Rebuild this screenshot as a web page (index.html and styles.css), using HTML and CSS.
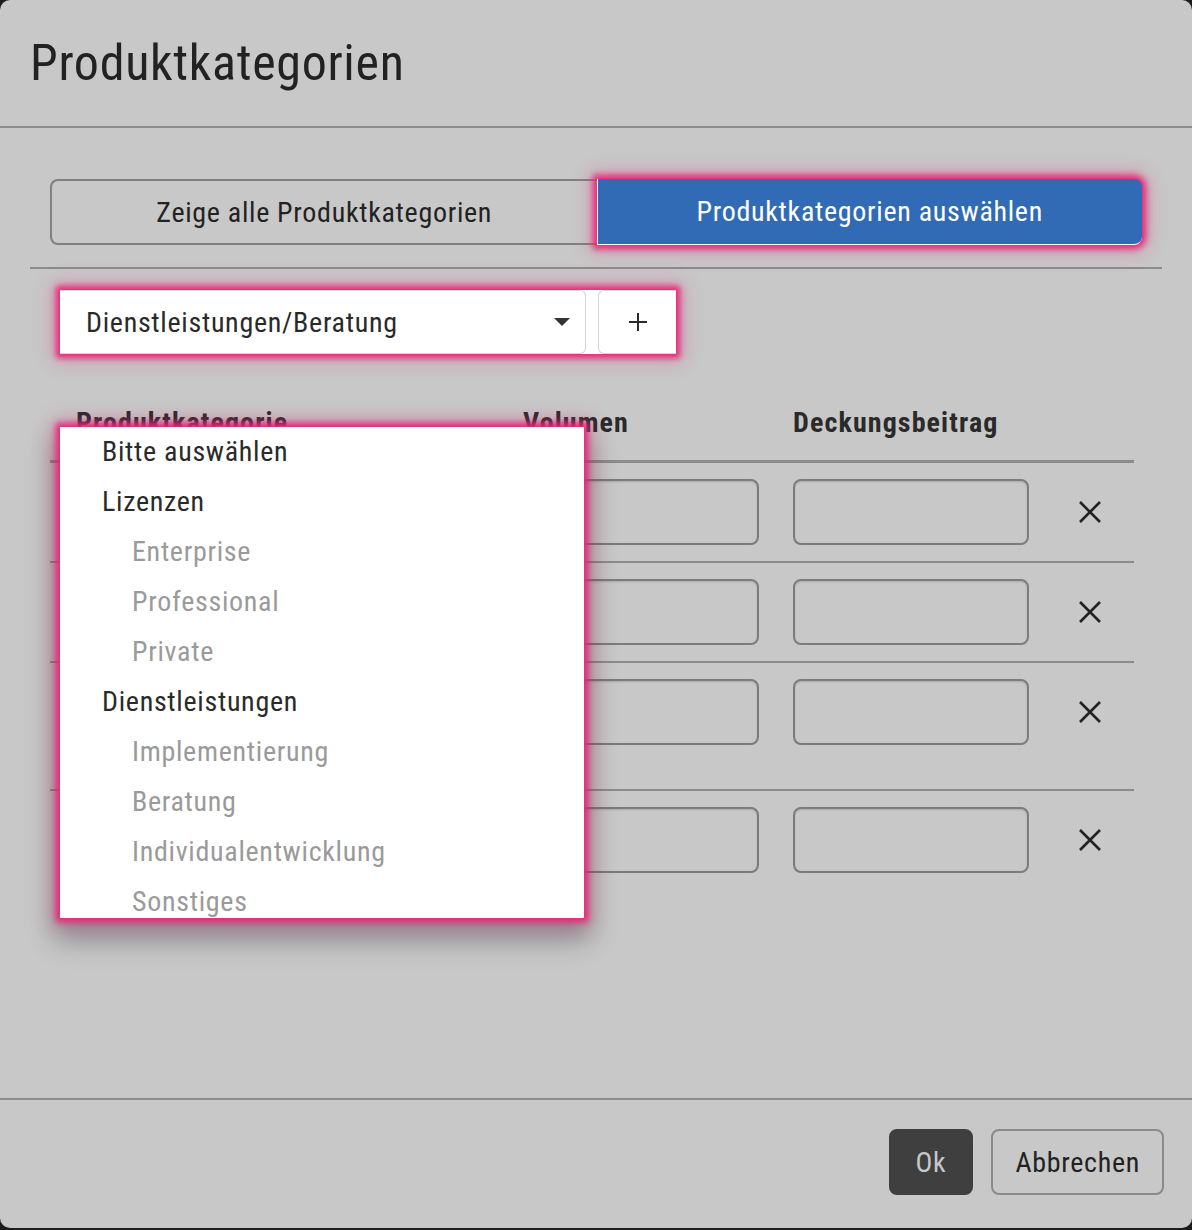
FILE: index.html
```html
<!DOCTYPE html>
<html lang="de">
<head>
  <meta charset="UTF-8">
  <meta name="viewport" content="width=device-width, initial-scale=1.0">
  <title>Produktkategorien</title>
  <link rel="stylesheet" href="styles.css">
</head>
<body>
  <div class="dialog">
    <!-- Header -->
    <header class="dialog-header">
      <h1>Produktkategorien</h1>
    </header>

    <div class="dialog-body">
      <!-- Mode toggle -->
      <div class="toggle-group">
        <button type="button" class="toggle">Zeige alle Produktkategorien</button>
        <button type="button" class="toggle active">Produktkategorien auswählen</button>
      </div>

      <div class="divider"></div>

      <!-- Category picker -->
      <div class="picker">
        <div class="select">
          <span>Dienstleistungen/Beratung</span>
          <span class="caret"></span>
        </div>
        <button type="button" class="add-btn">
          <svg width="22" height="22" viewBox="0 0 22 22"><path d="M11 2v18M2 11h18" stroke="#2a2a2a" stroke-width="2" fill="none"/></svg>
        </button>

        <ul class="dropdown">
          <li>Bitte auswählen</li>
          <li>Lizenzen</li>
          <li class="sub">Enterprise</li>
          <li class="sub">Professional</li>
          <li class="sub">Private</li>
          <li>Dienstleistungen</li>
          <li class="sub">Implementierung</li>
          <li class="sub">Beratung</li>
          <li class="sub">Individualentwicklung</li>
          <li class="sub">Sonstiges</li>
        </ul>
      </div>

      <!-- Category table (first column lies under the open dropdown) -->
      <div class="table">
        <div class="row head">
          <div>Produktkategorie</div>
          <div>Volumen</div>
          <div>Deckungsbeitrag</div>
          <div></div>
        </div>
        <div class="row">
          <div class="cat"></div>
          <input type="text">
          <input type="text">
          <button type="button" class="remove"><svg width="24" height="24" viewBox="0 0 24 24"><path d="M2 2l20 20M22 2L2 22" stroke="#222" stroke-width="2.6" fill="none"/></svg></button>
        </div>
        <div class="row">
          <div class="cat"></div>
          <input type="text">
          <input type="text">
          <button type="button" class="remove"><svg width="24" height="24" viewBox="0 0 24 24"><path d="M2 2l20 20M22 2L2 22" stroke="#222" stroke-width="2.6" fill="none"/></svg></button>
        </div>
        <div class="row">
          <div class="cat tall"></div>
          <input type="text">
          <input type="text">
          <button type="button" class="remove"><svg width="24" height="24" viewBox="0 0 24 24"><path d="M2 2l20 20M22 2L2 22" stroke="#222" stroke-width="2.6" fill="none"/></svg></button>
        </div>
        <div class="row last">
          <div class="cat"></div>
          <input type="text">
          <input type="text">
          <button type="button" class="remove"><svg width="24" height="24" viewBox="0 0 24 24"><path d="M2 2l20 20M22 2L2 22" stroke="#222" stroke-width="2.6" fill="none"/></svg></button>
        </div>
      </div>
    </div>

    <!-- Footer -->
    <footer class="dialog-footer">
      <button type="button" class="btn btn-primary">Ok</button>
      <button type="button" class="btn">Abbrechen</button>
    </footer>
  </div>
</body>
</html>
```

FILE: styles.css
```css
/* Global Styles */
* {
  margin: 0;
  padding: 0;
  box-sizing: border-box;
}
html {
  background-color: #1c1c1c;
}
body {
  font-family: "Liberation Sans Narrow", "Roboto Condensed", "DejaVu Sans Condensed", "Open Sans", sans-serif;
  color: #2a2a2a;
  font-size: 28px;
  letter-spacing: 0.7px;
}
button, input {
  font: inherit;
  color: inherit;
  letter-spacing: inherit;
}

/* Dialog */
.dialog {
  width: 1192px;
  height: 1228px;
  background-color: #c8c8c8;
  border-radius: 10px;
  display: flex;
  flex-direction: column;
}
.dialog-header {
  height: 128px;
  padding: 0 30px;
  display: flex;
  align-items: center;
  border-bottom: 2px solid #8c8c8c;
}
.dialog-header h1 {
  font-size: 50px;
  font-weight: normal;
  letter-spacing: 0.7px;
  color: #222;
}
.dialog-body {
  flex: 1;
  padding: 51px 30px 0;
}

/* Toggle */
.toggle-group {
  display: flex;
  margin: 0 20px;
  height: 66px;
}
.toggle {
  flex: 1;
  background: transparent;
  border: 2px solid #808080;
  border-right: none;
  border-radius: 8px 0 0 8px;
  color: #222;
  cursor: pointer;
}
.toggle.active {
  background-color: #326bb5;
  color: #fff;
  border: none;
  border-left: 1px solid #fff;
  border-bottom: 1px solid #fff;
  border-radius: 0 8px 8px 0;
  box-shadow: 0 0 6px 4px #e8287a, 0 0 18px 7px rgba(232, 40, 122, 0.3);
}
.divider {
  height: 2px;
  background-color: #8c8c8c;
  margin-top: 22px;
}

/* Picker */
.picker {
  position: relative;
  display: flex;
  gap: 12px;
  width: 616px;
  height: 64px;
  margin: 21px 0 0 30px;
  background: #fff;
  box-shadow: 0 0 6px 4px #e8287a, 0 0 18px 7px rgba(232, 40, 122, 0.3);
}
.select {
  flex: 1;
  display: flex;
  align-items: center;
  justify-content: space-between;
  padding: 0 15px 0 26px;
  border: 1px solid #d4d4d4;
  border-left: none;
  border-radius: 0 6px 6px 0;
}
.caret {
  border-left: 8px solid transparent;
  border-right: 8px solid transparent;
  border-top: 8px solid #333;
}
.add-btn {
  width: 78px;
  background: #fff;
  border: 1px solid #d4d4d4;
  border-right: none;
  border-radius: 6px 0 0 6px;
  display: flex;
  align-items: center;
  justify-content: center;
}
.dropdown {
  position: absolute;
  top: 137px;
  left: 0;
  width: 524px;
  height: 491px;
  overflow: hidden;
  list-style: none;
  background: #fff;
  z-index: 2;
  box-shadow: 0 0 6px 4px #e8287a, 0 0 18px 7px rgba(232, 40, 122, 0.3), 0 16px 26px 6px rgba(0, 0, 0, 0.3);
}
.dropdown li {
  height: 50px;
  line-height: 50px;
  padding-left: 42px;
  color: #2a2a2a;
}
.dropdown li.sub {
  padding-left: 72px;
  color: #9a9a9a;
}

/* Table */
.table {
  margin: 40px 28px 0 20px;
}
.row {
  display: grid;
  grid-template-columns: 1fr 236px 236px 54px;
  column-gap: 34px;
  align-items: start;
  padding: 16px 17px 16px 26px;
  border-bottom: 2px solid #8c8c8c;
}
.row.head {
  padding-top: 12px;
  padding-bottom: 20px;
  border-bottom-width: 3px;
  font-weight: bold;
  letter-spacing: 1.1px;
  line-height: 34px;
}
.row.last {
  border-bottom: none;
}
.cat {
  height: 66px;
}
.cat.tall {
  height: 94px;
}
.row input {
  height: 66px;
  width: 100%;
  background: transparent;
  border: 2px solid #7c7c7c;
  border-radius: 8px;
  box-shadow: inset 0 1px 2px rgba(0, 0, 0, 0.15);
}
.remove {
  height: 66px;
  background: none;
  border: none;
  display: flex;
  align-items: center;
  justify-content: center;
  cursor: pointer;
}

/* Footer */
.dialog-footer {
  height: 130px;
  border-top: 2px solid #8c8c8c;
  display: flex;
  justify-content: flex-end;
  align-items: center;
  gap: 18px;
  padding: 0 28px 4px;
}
.btn {
  height: 66px;
  padding: 0 22px;
  border: 2px solid #8a8a8a;
  border-radius: 8px;
  background: transparent;
  color: #222;
  cursor: pointer;
}
.btn-primary {
  background-color: #3f3f3f;
  border-color: #3f3f3f;
  color: #c8c8c8;
  padding: 0 25px;
}
```
